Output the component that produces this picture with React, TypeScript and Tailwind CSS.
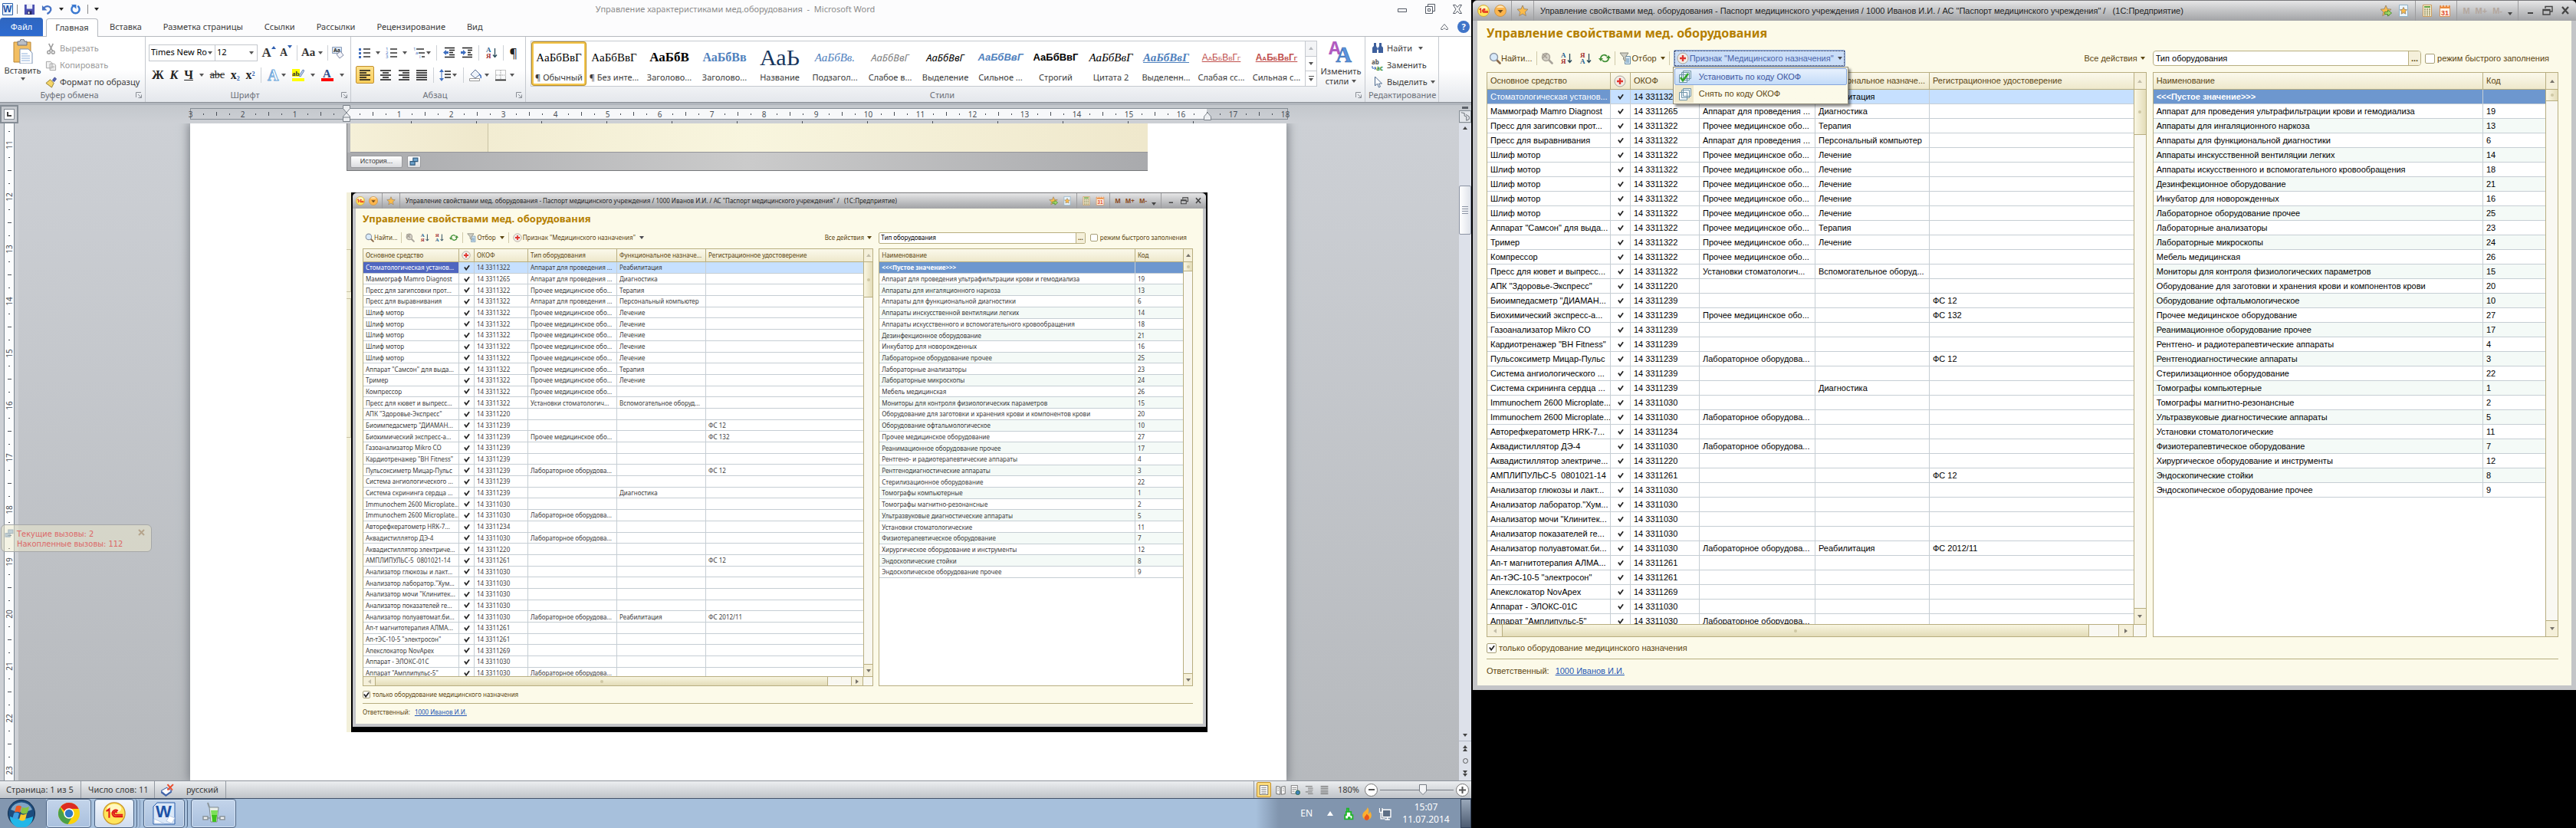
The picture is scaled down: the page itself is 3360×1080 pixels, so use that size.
import React from 'react';

type Row = [string, string, string?, string?, string?];

const ASSETS: Row[] = [
  ['Стоматологическая установ...', '14 3311322', 'Аппарат для проведения ...', 'Реабилитация'],
  ['Маммограф Mamro Diagnost', '14 3311265', 'Аппарат для проведения ...', 'Диагностика'],
  ['Пресс для загипсовки прот...', '14 3311322', 'Прочее медицинское обо...', 'Терапия'],
  ['Пресс для выравнивания', '14 3311322', 'Аппарат для проведения ...', 'Персональный компьютер'],
  ['Шлиф мотор', '14 3311322', 'Прочее медицинское обо...', 'Лечение'],
  ['Шлиф мотор', '14 3311322', 'Прочее медицинское обо...', 'Лечение'],
  ['Шлиф мотор', '14 3311322', 'Прочее медицинское обо...', 'Лечение'],
  ['Шлиф мотор', '14 3311322', 'Прочее медицинское обо...', 'Лечение'],
  ['Шлиф мотор', '14 3311322', 'Прочее медицинское обо...', 'Лечение'],
  ['Аппарат "Самсон" для выда...', '14 3311322', 'Прочее медицинское обо...', 'Терапия'],
  ['Тример', '14 3311322', 'Прочее медицинское обо...', 'Лечение'],
  ['Компрессор', '14 3311322', 'Прочее медицинское обо...'],
  ['Пресс для кювет и выпресс...', '14 3311322', 'Установки стоматологич...', 'Вспомогательное оборуд...'],
  ['АПК "Здоровье-Экспресс"', '14 3311220'],
  ['Биоимпедасметр "ДИАМАН...', '14 3311239', '', '', 'ФС 12'],
  ['Биохимический экспресс-а...', '14 3311239', 'Прочее медицинское обо...', '', 'ФС 132'],
  ['Газоанализатор Mikro CO', '14 3311239'],
  ['Кардиотренажер "BH Fitness"', '14 3311239'],
  ['Пульсоксиметр Мицар-Пульс', '14 3311239', 'Лабораторное оборудова...', '', 'ФС 12'],
  ['Система ангиологического ...', '14 3311239'],
  ['Система скрининга сердца ...', '14 3311239', '', 'Диагностика'],
  ['Immunochem 2600 Microplate...', '14 3311030'],
  ['Immunochem 2600 Microplate...', '14 3311030', 'Лабораторное оборудова...'],
  ['Авторефкератометр HRK-7...', '14 3311234'],
  ['Аквадистиллятор ДЭ-4', '14 3311030', 'Лабораторное оборудова...'],
  ['Аквадистиллятор электриче...', '14 3311220'],
  ['АМПЛИПУЛЬС-5  0801021-14', '14 3311261', '', '', 'ФС 12'],
  ['Анализатор глюкозы и лакт...', '14 3311030'],
  ['Анализатор лаборатор."Хум...', '14 3311030'],
  ['Анализатор мочи "Клинитек...', '14 3311030'],
  ['Анализатор показателей ге...', '14 3311030'],
  ['Анализатор полуавтомат.би...', '14 3311030', 'Лабораторное оборудова...', 'Реабилитация', 'ФС 2012/11'],
  ['Ап-т магнитотерапия АЛМА...', '14 3311261'],
  ['Ап-тЭС-10-5 "электросон"', '14 3311261'],
  ['Апекслокатор NovApex', '14 3311269'],
  ['Аппарат - ЭЛОКС-01С', '14 3311030'],
  ['Аппарат "Амплипульс-5"', '14 3311030', 'Лабораторное оборудова...'],
];

const TYPES: [string, string][] = [
  ['<<<Пустое значение>>>', ''],
  ['Аппарат для проведения ультрафильтрации крови и гемодиализа', '19'],
  ['Аппараты для ингаляционного наркоза', '13'],
  ['Аппараты для функциональной диагностики', '6'],
  ['Аппараты инскусственной вентиляции легких', '14'],
  ['Аппараты искусственного и вспомогательного кровообращения', '18'],
  ['Дезинфекционное оборудование', '21'],
  ['Инкубатор для новорожденных', '16'],
  ['Лабораторное оборудование прочее', '25'],
  ['Лабораторные анализаторы', '23'],
  ['Лабораторные микроскопы', '24'],
  ['Мебель медицинская', '26'],
  ['Мониторы для контроля физиологических параметров', '15'],
  ['Оборудование для заготовки и хранения крови и компонентов крови', '20'],
  ['Оборудование офтальмологическое', '10'],
  ['Прочее медицинское оборудование', '27'],
  ['Реанимационное оборудование прочее', '17'],
  ['Рентгено- и радиотерапевтические аппараты', '4'],
  ['Рентгенодиагностические аппараты', '3'],
  ['Стерилизационное оборудование', '22'],
  ['Томографы компьютерные', '1'],
  ['Томографы магнитно-резонансные', '2'],
  ['Ультразвуковые диагностические аппараты', '5'],
  ['Установки стоматологические', '11'],
  ['Физиотерапевтическое оборудование', '7'],
  ['Хирургическое оборудование и инструменты', '12'],
  ['Эндоскопические стойки', '8'],
  ['Эндоскопическое оборудование прочее', '9'],
];

const large = {
  open: true,
  text: "font-['Liberation_Sans',Arial,sans-serif] text-[11px]",
  icon: 'size-4',
  bar: 'h-[26px] px-[6px]',
  barGap: 'gap-[6px]',
  barRight: 'gap-[7px] ml-auto',
  frame: 'px-[6px] pb-[6px]',
  body: 'pl-3 pr-[17px]',
  heading: 'h-8 leading-8 text-[16px]',
  split: 'gap-2',
  toolbar: 'h-[22px] mt-[6px] mb-[7px] gap-[5px] pl-[3px]',
  icons: 'gap-[9px]',
  divider: 'h-[18px]',
  input: 'h-[20px] rounded pl-[3px]',
  dots: 'w-4',
  box: 'size-[13px]',
  form: 'gap-2',
  formRight: 'mr-3',
  headCell: 'h-[22px] leading-[21px] px-1',
  cell: 'h-[19px] leading-[18px] px-1',
  cols: ['w-[161px]', 'w-[26px]', 'w-[90px]', 'w-[151px]', 'w-[149px]', ''],
  codeCol: 'w-[81px]',
  tableA: '',
  tableB: '',
  scroll: 'w-4',
  scrollHead: 'h-[22px]',
  thumbA: 'h-[59px]',
  thumbB: 'h-[15px]',
  down: 'h-[21px]',
  hscroll: 'h-4',
  hbtn: 'w-5',
  hgap: 'w-[38px]',
  footer: 'h-[29px]',
  owner: 'h-[34px] pb-1 gap-2',
  current: 'bg-[#6d97cf]',
  memory: 'text-[#b3a79e]',
};

const compact: typeof large = {
  open: false,
  text: "font-['Noto_Sans',sans-serif] text-[8px]",
  icon: 'size-3',
  bar: 'h-[20px] px-1',
  barGap: 'gap-[5px]',
  barRight: 'gap-[6px] ml-auto',
  frame: 'px-1 pb-1',
  body: 'pl-[9px] pr-[13px]',
  heading: 'h-[26px] leading-[26px] text-[13px]',
  split: 'gap-[7px]',
  toolbar: 'h-[18px] mt-[3px] mb-[5px] gap-[5px] pl-[3px]',
  icons: 'gap-[7px]',
  divider: 'h-[14px]',
  input: 'h-[15px] rounded-xs pl-[2px]',
  dots: 'w-3',
  box: 'size-[10px]',
  form: 'gap-[6px]',
  formRight: 'mr-2',
  headCell: 'h-[17px] leading-4 px-[3px]',
  cell: 'h-[14px] leading-[13px] px-[3px]',
  cols: ['w-[125px]', 'w-[20px]', 'w-[70px]', 'w-[116px]', 'w-[116px]', ''],
  codeCol: 'w-[62px]',
  tableA: 'h-[561px]',
  tableB: 'h-[429px]',
  scroll: 'w-3',
  scrollHead: 'h-[17px]',
  thumbA: 'h-[46px]',
  thumbB: 'h-3',
  down: 'h-4',
  hscroll: 'h-3',
  hbtn: 'w-4',
  hgap: 'w-[30px]',
  footer: 'h-[23px]',
  owner: 'h-[26px] pb-1 gap-[6px]',
  current: 'bg-[#4f66c0]',
  memory: 'text-[#8a4a20]',
};

type Skin = typeof large;

const Icon: React.FC<{ className?: string; box?: string; children: React.ReactNode }> = ({
  className = 'size-4',
  box = '0 0 16 16',
  children,
}) => (
  <svg viewBox={box} className={`${className} shrink-0`} fill="none" aria-hidden="true">
    {children}
  </svg>
);

const Caret: React.FC<{ className?: string }> = ({ className = 'text-[#555]' }) => (
  <svg viewBox="0 0 6 4" className={`w-[6px] h-1 shrink-0 ${className}`} aria-hidden="true">
    <path d="M0 0h6L3 4z" fill="currentColor" />
  </svg>
);

const PlusIcon: React.FC<{ className: string }> = ({ className }) => (
  <Icon className={className}>
    <circle cx="8" cy="8" r="7" fill="#f1ece6" stroke="#aaa498" />
    <path d="M6.800 4h2.400v2.800H12v2.400H9.200V12H6.800V9.200H4V6.800h2.800z" fill="#e0352f" />
  </Icon>
);

const Magnifier: React.FC<{ className: string; off?: boolean }> = ({ className, off }) => (
  <Icon className={className}>
    <path d="M10 10l4.500 4.500" stroke={off ? '#a8a39a' : '#8a6a4a'} strokeWidth="2.600" strokeLinecap="round" />
    <circle cx="6.500" cy="6.500" r="5" fill={off ? '#d4d0c6' : '#d8eafa'} stroke={off ? '#aaa59b' : '#8c96a4'} strokeWidth="1.400" />
    {off && <path d="M2 2l6 6M8 2L2 8" stroke="#a39d92" strokeWidth="1.500" />}
  </Icon>
);

const SortIcon: React.FC<{ className: string; desc?: boolean }> = ({ className, desc }) => (
  <Icon className={className}>
    <text x="1" y="7" fontSize="9" fontWeight="700" fontFamily="Liberation Serif, serif" fill={desc ? '#a33030' : '#1f5f8f'}>
      {desc ? 'Я' : 'А'}
    </text>
    <text x="1" y="15" fontSize="9" fontWeight="700" fontFamily="Liberation Serif, serif" fill={desc ? '#1f5f8f' : '#a33030'}>
      {desc ? 'А' : 'Я'}
    </text>
    <path d="M12.500 2v11M10 10.500l2.500 3 2.500-3" stroke="#2a4a5a" strokeWidth="1.300" />
  </Icon>
);

const RefreshIcon: React.FC<{ className: string }> = ({ className }) => (
  <Icon className={className}>
    <path d="M3 9V7a4.500 4.500 0 0 1 8-1.500M13 7v2a4.500 4.500 0 0 1-8 1.500" stroke="#3f8f35" strokeWidth="1.700" />
    <path d="M0 8h6L3 12zM10 8h6l-3-4z" fill="#3f8f35" />
  </Icon>
);

const FilterIcon: React.FC<{ className: string }> = ({ className }) => (
  <Icon className={className}>
    <path d="M7.500 5.500h7v10h-7z" fill="#dcebf5" stroke="#6b8fa8" />
    <path d="M9 9h4M9 11h4M9 13h4" stroke="#5a8ab0" />
    <path d="M1 1h11L8 6.500V12L5.500 9.500V6.500z" fill="#cfcfc6" stroke="#85857a" />
  </Icon>
);

const StarIcon: React.FC<{ className: string; page?: boolean; arrow?: boolean }> = ({ className, page, arrow }) => (
  <Icon className={className}>
    {page && <path d="M2.500.5h11v15h-11z" fill="#eaf4fb" stroke="#8fb2c8" />}
    <path
      d={page ? 'M8 3.500l1.400 2.900 3.100.4-2.300 2.200.6 3.100L8 10.600l-2.800 1.500.6-3.100-2.300-2.200 3.100-.4z' : 'M8 1l2 4.700 5 .5-3.700 3.400 1 5L8 12l-4.300 2.600 1-5L1 6.200l5-.5z'}
      fill="#fbbb4a"
      stroke="#9a8468"
      strokeWidth=".9"
    />
    {arrow && <path d="M6.500 9.500h4V7l5 4-5 4v-2.500h-4z" fill="#a4d867" stroke="#3f8a2f" strokeWidth=".9" />}
  </Icon>
);

const CalcIcon: React.FC<{ className: string }> = ({ className }) => (
  <Icon className={className}>
    <path d="M2.500.5h11v15h-11z" fill="#fbf3da" stroke="#c99a5a" />
    <path d="M4 2h8v2H4z" fill="#5f9f3f" />
    <path d="M4 6h2M7 6h2M10 6h2M4 8.500h2M7 8.500h2M10 8.500h2M4 11h2M7 11h2M10 11h2M4 13.500h2M7 13.500h2M10 13.500h2" stroke="#8a8a5a" strokeWidth="1.400" />
  </Icon>
);

const CalendarIcon: React.FC<{ className: string }> = ({ className }) => (
  <Icon className={className}>
    <path d="M1.500 1.500h13v14h-13z" fill="#fff6ea" stroke="#d9925a" />
    <path d="M2 2h12v3H2z" fill="#ec8a3c" />
    <path d="M4 0v3M8 0v3M12 0v3" stroke="#fff" />
    <text x="8" y="13.500" textAnchor="middle" fontSize="9" fontWeight="700" fontFamily="Liberation Sans, sans-serif" fill="#e04a2a">
      31
    </text>
  </Icon>
);

const OneCLogo: React.FC<{ className: string }> = ({ className }) => (
  <Icon className={className}>
    <circle cx="8" cy="8" r="7.500" fill="#ffe45a" stroke="#c9962a" strokeWidth=".7" />
    <ellipse cx="8" cy="4.500" rx="5" ry="3" fill="#fff8c0" />
    <path d="M2.500 6.500L4.500 5v6M10.500 6.300A2.300 2.300 0 1 0 9.500 10.200h4.500M9.800 7.500A1 1 0 1 0 9 8.900h5" stroke="#e01818" strokeWidth="1.100" />
  </Icon>
);

const TableScroll: React.FC<{ skin: Skin; thumb: string; off?: boolean }> = ({ skin, thumb, off }) => (
  <div className={`${skin.scroll} flex shrink-0 flex-col border-l border-[#b8ae80] bg-[#f9f8f2]`}>
    <button aria-label="Вверх" className={`${skin.scrollHead} flex shrink-0 items-center justify-center border-b border-[#b8ae80] bg-[#f5f0da]`}>
      <Caret className={off ? 'rotate-180 text-[#c2bda8]' : 'rotate-180 text-[#76726a]'} />
    </button>
    <div className={`${thumb} flex shrink-0 items-center justify-center border-b border-[#b8ae80] bg-linear-to-r from-[#faf7e4] to-[#e3dcb8]`}>
      <span className="size-1 rounded-full bg-[#cfc8a4]" />
    </div>
    <div className="grow" />
    <button aria-label="Вниз" className={`${skin.down} flex shrink-0 items-center justify-center border-t border-[#b8ae80] bg-[#f5f0da]`}>
      <Caret className="text-[#76726a]" />
    </button>
  </div>
);

const head = 'overflow-hidden border-b border-r border-[#b8ae80] bg-linear-to-b from-[#fbf9ec] to-[#eee8cb] text-left font-normal text-[#5c4610] whitespace-nowrap last:border-r-0';
const line = 'overflow-hidden border-b border-r border-[#c6ced4] py-0 whitespace-pre last:border-r-0';

const AssetTable: React.FC<{ skin: Skin }> = ({ skin }) => (
  <div className="flex min-h-0 grow flex-col border border-[#b8ae80] bg-white">
    <div className="flex min-h-0 flex-1">
      <div className="min-w-0 flex-1 overflow-hidden">
        <table className={`${skin.tableA} w-full table-fixed border-separate border-spacing-0`}>
          <thead>
            <tr>
              <th className={`${head} ${skin.headCell} ${skin.cols[0]}`}>Основное средство</th>
              <th className={`${head} ${skin.headCell} ${skin.cols[1]}`} aria-label="Медицинское назначение">
                <PlusIcon className={`${skin.icon} block`} />
              </th>
              <th className={`${head} ${skin.headCell} ${skin.cols[2]}`}>ОКОФ</th>
              <th className={`${head} ${skin.headCell} ${skin.cols[3]}`}>Тип оборудования</th>
              <th className={`${head} ${skin.headCell} ${skin.cols[4]}`}>Функциональное назначе...</th>
              <th className={`${head} ${skin.headCell}`}>Регистрационное удостоверение</th>
            </tr>
          </thead>
          <tbody>
            {ASSETS.map(([name, code, kind, purpose, cert], i) => (
              <tr key={i} className={i === 0 ? 'bg-[#c6e0ff]' : 'bg-white'}>
                <td className={`${line} ${skin.cell} ${i === 0 ? `${skin.current} text-white` : ''}`}>{name}</td>
                <td className={`${line} ${skin.cell}`}>
                  <Icon className="mx-auto block size-[8px]" box="0 0 9 9">
                    <path d="M1 4l2.500 3.500L8 1.500" stroke="#222" strokeWidth="2" />
                  </Icon>
                </td>
                <td className={`${line} ${skin.cell}`}>{code}</td>
                <td className={`${line} ${skin.cell}`}>{kind}</td>
                <td className={`${line} ${skin.cell}`}>{purpose}</td>
                <td className={`${line} ${skin.cell}`}>{cert}</td>
              </tr>
            ))}
          </tbody>
        </table>
      </div>
      <TableScroll skin={skin} thumb={skin.thumbA} off />
    </div>
    <div className={`${skin.hscroll} flex shrink-0 border-t border-[#b8ae80] bg-[#f9f8f2]`}>
      <button aria-label="Влево" className={`${skin.hbtn} flex items-center justify-center border-r border-[#b8ae80] bg-[#f5f0da]`}>
        <Caret className="rotate-90 text-[#c2bda8]" />
      </button>
      <div className="flex grow items-center justify-center border-r border-[#b8ae80] bg-linear-to-b from-[#f8f5e0] to-[#e3dcb8]">
        <span className="size-1 rounded-full bg-[#cfc8a4]" />
      </div>
      <div className={skin.hgap} />
      <button aria-label="Вправо" className={`${skin.hbtn} flex items-center justify-center border-x border-[#b8ae80] bg-[#f5f0da]`}>
        <Caret className="-rotate-90 text-[#76726a]" />
      </button>
      <div className={skin.scroll} />
    </div>
  </div>
);

const TypeTable: React.FC<{ skin: Skin }> = ({ skin }) => (
  <div className="flex min-h-0 grow border border-[#b8ae80] bg-white">
    <div className="min-w-0 flex-1 overflow-hidden">
      <table className={`${skin.tableB} w-full table-fixed border-separate border-spacing-0`}>
        <thead>
          <tr>
            <th className={`${head} ${skin.headCell}`}>Наименование</th>
            <th className={`${head} ${skin.headCell} ${skin.codeCol}`}>Код</th>
          </tr>
        </thead>
        <tbody>
          {TYPES.map(([name, code], i) => (
            <tr key={name} className={i === 0 ? 'bg-[#6d97cf] font-bold text-white' : 'odd:bg-[#f4faf7] even:bg-white'}>
              <td className={`${line} ${skin.cell}`}>{name}</td>
              <td className={`${line} ${skin.cell}`}>{code}</td>
            </tr>
          ))}
        </tbody>
      </table>
    </div>
    <TableScroll skin={skin} thumb={skin.thumbB} />
  </div>
);

const FlagMenu: React.FC = () => (
  <div role="menu" className="absolute top-[22px] -left-px z-10 w-[229px] border border-[#8f8a78] bg-[#fcfae9] p-px shadow-[3px_3px_3px_rgba(0,0,0,.45)]">
    <button role="menuitem" className="flex h-[22px] w-full items-center gap-[10px] rounded-xs border border-[#86a6dc] bg-linear-to-b from-[#e8f1fd] to-[#c3dbf8] px-[5px] text-[#3d56a0]">
      <Icon>
        <path d="M5.500.5h10v10h-10zM3.500 2.500h10v10h-10zM.5 5.500h10v10h-10z" fill="#e4f1f8" stroke="#6f94a8" />
        <path d="M2 9l3 4 7-9" stroke="#35a52a" strokeWidth="2.600" />
      </Icon>
      Установить по коду ОКОФ
    </button>
    <button role="menuitem" className="flex h-[23px] w-full items-center gap-[10px] bg-linear-to-r from-[#efe8cc] from-[25px] to-[#fcfae9] to-[25px] px-[6px] text-[#5c4610]">
      <Icon>
        <path d="M5.500.5h10v10h-10zM3.500 2.500h10v10h-10zM.5 5.500h10v10h-10z" fill="#f4f9fc" stroke="#6f94a8" />
      </Icon>
      Снять по коду ОКОФ
    </button>
  </div>
);

const EnterpriseWindow: React.FC<{ skin: Skin; id: string }> = ({ skin, id }) => {
  const divider = <span className={`${skin.divider} w-px shrink-0 bg-[#cfc9a8]`} />;
  const barDivider = <span className="h-full w-px shrink-0 bg-[#9c9c9e]" />;

  return (
    <section className={`flex h-full min-w-0 flex-col overflow-hidden rounded-t-md border-t border-[#77777a] bg-[#c4c5c8] ${skin.text}`}>
      <header className={`${skin.bar} ${skin.barGap} flex shrink-0 items-center whitespace-nowrap bg-linear-to-b from-[#e6e6e7] via-[#c3c4c6] to-[#a2a3a6] text-[#222]`}>
        <OneCLogo className={skin.icon} />
        <Icon className={skin.icon}>
          <circle cx="8" cy="8" r="7.500" fill="#fbb54e" stroke="#c38a3a" strokeWidth=".7" />
          <path d="M3 4a6 6 0 0 1 10 0z" fill="#ffe6b8" />
          <path d="M4.500 7h7L8 11z" fill="#6b4a1f" />
        </Icon>
        {barDivider}
        <StarIcon className={skin.icon} />
        {barDivider}
        <h1 className="overflow-hidden pl-[2px] whitespace-pre">
          {'Управление свойствами мед. оборудования - Паспорт медицинского учреждения / 1000 Иванов И.И. / АС "Паспорт медицинского учреждения" /   (1С:Предприятие)'}
        </h1>
        <div className={`${skin.barRight} flex h-full items-center`}>
          <StarIcon className={skin.icon} arrow />
          <StarIcon className={skin.icon} page />
          {barDivider}
          <CalcIcon className={skin.icon} />
          <CalendarIcon className={skin.icon} />
          {barDivider}
          <button className={`font-bold ${skin.memory}`}>M</button>
          <button className={`font-bold ${skin.memory}`}>M+</button>
          <button className={`font-bold ${skin.memory}`}>M-</button>
          <Caret className="translate-y-1 text-[#444]" />
          {barDivider}
          <button aria-label="Свернуть">
            <Icon className={skin.icon}><path d="M5 11h7" stroke="#444" strokeWidth="2" /></Icon>
          </button>
          <button aria-label="Восстановить">
            <Icon className={skin.icon}><path d="M5 5V2.500h9V9h-3M2 6.500h9V13H2zM2 7.500h9" stroke="#444" strokeWidth="1.400" /></Icon>
          </button>
          <button aria-label="Закрыть">
            <Icon className={skin.icon}><path d="M4 3l8 9M12 3l-8 9" stroke="#444" strokeWidth="2.200" /></Icon>
          </button>
        </div>
      </header>

      <div className={`${skin.frame} flex min-h-0 grow flex-col`}>
        <div className={`${skin.body} flex min-h-0 grow flex-col bg-[#fcfae9]`}>
          <h2 className={`${skin.heading} shrink-0 font-['Noto_Sans',sans-serif] font-bold whitespace-nowrap text-[#b57f00]`}>
            Управление свойствами мед. оборудования
          </h2>

          <div className={`${skin.split} flex min-h-0 grow`}>
            <div className="flex min-h-0 min-w-0 flex-[860] flex-col">
              <div className={`${skin.toolbar} flex shrink-0 items-center whitespace-nowrap text-[#5c4610]`}>
                <button className="flex items-center">
                  <Magnifier className={skin.icon} />
                  Найти...
                </button>
                {divider}
                <div className={`${skin.icons} flex`}>
                  <button aria-label="Отменить поиск"><Magnifier className={skin.icon} off /></button>
                  <button aria-label="По возрастанию"><SortIcon className={skin.icon} /></button>
                  <button aria-label="По убыванию"><SortIcon className={skin.icon} desc /></button>
                  <button aria-label="Обновить"><RefreshIcon className={skin.icon} /></button>
                </div>
                {divider}
                <button className="flex items-center gap-px">
                  <FilterIcon className={skin.icon} />
                  Отбор
                  <Caret className="ml-1 text-[#5c4610]" />
                </button>
                {divider}
                <div className="relative">
                  <button
                    className={
                      skin.open
                        ? 'flex h-[22px] items-center gap-px rounded-xs border border-[#7f9fd8] bg-[#c9ddf8] px-[3px] text-[#4a63a8] outline-1 -outline-offset-2 outline-dotted outline-[#334]'
                        : 'flex items-center gap-px'
                    }
                  >
                    <PlusIcon className={skin.icon} />
                    Признак "Медицинского назначения"
                    <Caret className="ml-1 text-[#4a4a50]" />
                  </button>
                  {skin.open && <FlagMenu />}
                </div>
                <button className="ml-auto flex items-center gap-1 pr-[2px]">
                  Все действия
                  <Caret className="text-[#5c4610]" />
                </button>
              </div>
              <AssetTable skin={skin} />
            </div>

            <div className="flex min-h-0 min-w-0 flex-[529] flex-col">
              <div className={`${skin.toolbar} ${skin.form} !pl-0 flex shrink-0 items-center whitespace-nowrap text-[#5c4610]`}>
                <div className={`${skin.input} flex min-w-0 grow overflow-hidden border border-[#b8ae80] bg-white`}>
                  <input aria-label="Реквизит" defaultValue="Тип оборудования" className="min-w-0 grow text-black outline-none" />
                  <button className={`${skin.dots} border-l border-[#b8ae80] bg-[#f5f0da] leading-none font-bold`}>...</button>
                </div>
                <label className={`${skin.formRight} flex items-center gap-[3px]`}>
                  <input type="checkbox" className={`${skin.box} appearance-none rounded-xs border border-[#a89f78] bg-white`} />
                  режим быстрого заполнения
                </label>
              </div>
              <TypeTable skin={skin} />
            </div>
          </div>

          <div className={`${skin.footer} flex shrink-0 items-center gap-[3px] border-b border-[#b8ae80] text-[#5c4610]`}>
            <span className="relative flex">
              <input id={`${id}-only`} type="checkbox" defaultChecked className={`${skin.box} appearance-none rounded-xs border border-[#a89f78] bg-white`} />
              <Icon className="pointer-events-none absolute inset-0 m-auto size-[8px]" box="0 0 9 9">
                <path d="M1 4l2.500 3.500L8 1.500" stroke="#222" strokeWidth="2" />
              </Icon>
            </span>
            <label htmlFor={`${id}-only`}>только оборудование медицинского назначения</label>
          </div>
          <div className={`${skin.owner} flex shrink-0 items-center text-[#5c4610]`}>
            Ответственный:
            <a href="#owner" className="text-[#2357b5] underline">1000 Иванов И.И.</a>
          </div>
        </div>
      </div>
    </section>
  );
};

const STYLES: [string, string, string][] = [
  ['АаБбВвГ', '¶ Обычный', "font-['Liberation_Serif',serif] text-[15px]"],
  ['АаБбВвГ', '¶ Без инте...', "font-['Liberation_Serif',serif] text-[15px]"],
  ['АаБбВ', 'Заголово...', "font-['Liberation_Serif',serif] font-bold text-[17px]"],
  ['АаБбВв', 'Заголово...', "font-['Liberation_Serif',serif] font-bold text-[16px] text-[#4f81bd]"],
  ['АаЬ', 'Название', "font-['Liberation_Serif',serif] text-[30px] text-[#17365d]"],
  ['АаБбВв.', 'Подзагол...', "font-['Liberation_Serif',serif] italic text-[15px] text-[#4f81bd]"],
  ['АаБбВвГ', 'Слабое в...', "font-['Noto_Sans',sans-serif] italic text-[13px] text-[#808080]"],
  ['АаБбВвГ', 'Выделение', "font-['Noto_Sans',sans-serif] italic text-[13px]"],
  ['АаБбВвГ', 'Сильное ...', "font-['Liberation_Sans',sans-serif] italic font-bold text-[13px] text-[#4f81bd]"],
  ['АаБбВвГ', 'Строгий', "font-['Liberation_Sans',sans-serif] font-bold text-[13px]"],
  ['АаБбВвГ', 'Цитата 2', "font-['Liberation_Serif',serif] italic text-[15px]"],
  ['АаБбВвГ', 'Выделенн...', "font-['Liberation_Serif',serif] italic font-bold text-[15px] text-[#4f81bd] underline"],
  ['АаБбВвГг', 'Слабая сс...', "font-['Liberation_Sans',sans-serif] text-[12px] text-[#c0504d] underline [font-variant:small-caps]"],
  ['АаБбВвГг', 'Сильная с...', "font-['Liberation_Sans',sans-serif] font-bold text-[12px] text-[#c0504d] underline [font-variant:small-caps]"],
];

const GroupBox: React.FC<{ title: string; className?: string; launcher?: boolean; children: React.ReactNode }> = ({
  title,
  className = '',
  launcher = true,
  children,
}) => (
  <div className={`${className} flex h-full flex-col border-r border-[#c5c9cf]`}>
    <div className="min-h-0 grow">{children}</div>
    <div className="flex h-[18px] shrink-0 items-center px-1 text-[#6b7079]">
      <span className="grow text-center">{title}</span>
      {launcher && (
        <Icon className="size-2" box="0 0 8 8">
          <path d="M.5 7V.5H7M3 3l4 4M7.500 3.500v4h-4" stroke="#8a8f96" />
        </Icon>
      )}
    </div>
  </div>
);

const RibbonDivider = () => <span className="h-5 w-px shrink-0 bg-[#cdd1d6]" />;

const Lines: React.FC<{ d: string }> = ({ d }) => (
  <Icon><path d={d} stroke="#111" strokeWidth="1.500" /></Icon>
);

const Ribbon: React.FC = () => (
  <div className="flex h-[86px] shrink-0 border-b border-[#8d9299] bg-linear-to-b from-white via-white to-[#e4e7ec] whitespace-nowrap">
    <GroupBox title="Буфер обмена" className="w-[190px] shrink-0">
      <div className="flex h-full pt-[3px]">
        <button className="flex w-[59px] shrink-0 flex-col items-center leading-[18px]">
          <Icon className="size-8" box="0 0 32 32">
            <path d="M4 4h22v26H4z" fill="#f2be62" stroke="#b98532" />
            <path d="M9 3h3a3 3 0 0 1 6 0h3v5H9z" fill="#b9bec6" stroke="#6c7280" />
            <path d="M12 13h11l5 5v14H12z" fill="#fff" stroke="#7c93b5" />
            <path d="M14 19h8M14 22h11M14 25h11M14 28h11" stroke="#8fb0dc" />
          </Icon>
          Вставить
          <Caret />
        </button>
        <div className="flex flex-col pt-px leading-[22px]">
          <button disabled className="flex items-center gap-1 text-[#9a9a9a]">
            <Icon className="size-[15px]"><path d="M5 1l5 10M11 1L6 11" stroke="#9a9a9a" strokeWidth="1.600" /><circle cx="5" cy="13" r="2" stroke="#9a9a9a" strokeWidth="1.500" /><circle cx="11" cy="13" r="2" stroke="#9a9a9a" strokeWidth="1.500" /></Icon>
            Вырезать
          </button>
          <button disabled className="flex items-center gap-1 text-[#9a9a9a]">
            <Icon className="size-[15px]"><path d="M1.500 2.500h6l2 2v7h-8zM6.500 5.500h6l2 2v7h-8z" fill="#f2f2f2" stroke="#a2a2a2" /><path d="M8 9h5M8 11h5" stroke="#b5b5b5" /></Icon>
            Копировать
          </button>
          <button className="flex items-center gap-1">
            <Icon className="size-[15px]"><path d="M10 5l3-4 2.500 2-3 4z" fill="#5a67b8" stroke="#3d4a8c" /><path d="M7 4l5 5-3 6-8-6z" fill="#f5d568" stroke="#8d7a2d" /></Icon>
            Формат по образцу
          </button>
        </div>
      </div>
    </GroupBox>

    <GroupBox title="Шрифт" className="w-[268px] shrink-0">
      <div className="flex flex-col gap-[6px] px-1 pt-[9px]">
        <div className="flex h-[23px] items-center justify-between">
          <div className="flex h-[22px]">
            <div className="flex w-[87px] items-center border border-[#c3c7cd] bg-white pr-[3px] pl-[2px]">
              <input aria-label="Шрифт" defaultValue="Times New Ro" className="w-[74px] grow text-black outline-none" />
              <Caret />
            </div>
            <div className="flex w-[55px] items-center border border-l-0 border-[#c3c7cd] bg-white pr-1 pl-[2px]">
              <input aria-label="Размер шрифта" defaultValue="12" className="w-8 grow text-black outline-none" />
              <Caret />
            </div>
          </div>
          <button className="flex font-['Liberation_Serif',serif] text-[17px] font-bold text-[#333]">А<Caret className="mt-1 rotate-180 text-[#2f5fb0]" /></button>
          <button className="flex font-['Liberation_Serif',serif] text-[14px] font-bold text-[#333]">А<Caret className="mt-px text-[#2f5fb0]" /></button>
          <RibbonDivider />
          <button className="flex items-center gap-1 font-['Liberation_Serif',serif] text-[15px] font-bold text-[#333]">Аа<Caret /></button>
          <RibbonDivider />
          <button aria-label="Очистить формат" className="mr-1">
            <Icon><path d="M.5.5h12v8H.5z" fill="#dde8f6" stroke="#8a9cb8" /><text x="2" y="7" fontSize="7" fontWeight="700" fill="#333">Aa</text><path d="M6 10l5-4 4 5-5 4z" fill="#f4f4fa" stroke="#7f8aa5" /></Icon>
          </button>
        </div>
        <div className="flex h-[23px] items-center justify-between px-1 font-['Liberation_Serif',serif] text-[16px] text-[#222]">
          <button className="font-bold">Ж</button>
          <button className="font-bold italic">К</button>
          <button className="flex items-center gap-2 font-bold underline">Ч<Caret /></button>
          <button className="text-[14px] line-through">abc</button>
          <button className="font-bold">x<sub className="text-[8px] text-[#2f5fb0]">2</sub></button>
          <button className="font-bold">x<sup className="text-[8px] text-[#2f5fb0]">2</sup></button>
          <RibbonDivider />
          <button className="flex items-center gap-1 text-[20px] font-bold text-white [-webkit-text-stroke:1px_#6fa9dc]">А<Caret /></button>
          <button className="flex items-center gap-2">
            <Icon><path d="M0 0h10v10H0zM0 12h16v4H0z" fill="#ff0" /><text x="0" y="9" fontSize="9" fontWeight="700" fill="#333">ab</text><path d="M9 9l5-8 2 1-5 8z" fill="#c3d3ec" stroke="#4d6fa8" strokeWidth=".8" /></Icon>
            <Caret />
          </button>
          <button className="flex items-center gap-2">
            <Icon><path d="M0 12h16v4H0z" fill="#f00" /><text x="2" y="11" fontSize="15" fontWeight="700" fill="#2f4f8f">А</text></Icon>
            <Caret />
          </button>
        </div>
      </div>
    </GroupBox>

    <GroupBox title="Абзац" className="w-[228px] shrink-0">
      <div className="flex flex-col gap-[6px] px-[6px] pt-[9px]">
        <div className="flex h-[23px] items-center justify-between pr-1 pl-1">
          <button aria-label="Маркеры" className="flex items-center gap-[6px]">
            <Icon><path d="M6 3h9M6 8h9M6 13h9" stroke="#333" strokeWidth="1.300" /><path d="M0 2h3v3H0zM0 7h3v3H0zM0 12h3v3H0z" fill="#3f6fc0" /></Icon>
            <Caret />
          </button>
          <button aria-label="Нумерация" className="flex items-center gap-[6px]">
            <Icon><path d="M6 3h9M6 8h9M6 13h9" stroke="#333" strokeWidth="1.300" /><text x="0" y="5" fontSize="6" fill="#3f6fc0">1</text><text x="0" y="10" fontSize="6" fill="#3f6fc0">2</text><text x="0" y="15" fontSize="6" fill="#3f6fc0">3</text></Icon>
            <Caret />
          </button>
          <button aria-label="Многоуровневый список" className="flex items-center gap-px">
            <Icon><path d="M4 3h10M7 8h8M11 13h4" stroke="#333" strokeWidth="1.300" /><text x="0" y="5" fontSize="6" fill="#3f6fc0">1</text><text x="3" y="10" fontSize="6" fill="#3f6fc0">a</text><text x="8" y="15" fontSize="6" fill="#3f6fc0">i</text></Icon>
            <Caret />
          </button>
          <RibbonDivider />
          <button aria-label="Уменьшить отступ"><Icon><path d="M2 1.500h13M8 4.500h7M8 7.500h5M8 10.500h7M2 13.500h13" stroke="#222" strokeWidth="1.300" /><path d="M0 7.500L4 4v2h3v3H4v2z" fill="#3f6fc0" /></Icon></button>
          <button aria-label="Увеличить отступ"><Icon><path d="M2 1.500h13M9 4.500h6M9 7.500h4M9 10.500h6M2 13.500h13" stroke="#222" strokeWidth="1.300" /><path d="M7 7.500L3 4v2H0v3h3v2z" fill="#3f6fc0" /></Icon></button>
          <RibbonDivider />
          <button aria-label="Сортировка"><SortIcon className="size-4" /></button>
          <RibbonDivider />
          <button className="text-[16px] leading-none text-[#222]">¶</button>
        </div>
        <div className="flex h-[23px] items-center justify-between pr-2">
          <button aria-label="По левому краю" className="flex h-[23px] w-6 items-center justify-center rounded-xs border border-[#c2902e] bg-linear-to-b from-[#fde08a] to-[#fbcf5c]">
            <Lines d="M1 2h14M1 5h9M1 8h14M1 11h9M1 14h14" />
          </button>
          <button aria-label="По центру"><Lines d="M1 2h14M4 5h8M1 8h14M4 11h8M1 14h14" /></button>
          <button aria-label="По правому краю"><Lines d="M1 2h14M6 5h9M1 8h14M6 11h9M1 14h14" /></button>
          <button aria-label="По ширине"><Lines d="M1 2h14M1 5h14M1 8h14M1 11h14M1 14h14" /></button>
          <RibbonDivider />
          <button aria-label="Интервал" className="flex items-center gap-px">
            <Icon><path d="M7 3h8M7 7h8M7 11h8" stroke="#222" strokeWidth="1.300" /><path d="M3 0l3 4H0zM3 16l3-4H0zM2.500 4h1v8h-1z" fill="#3f6fc0" /></Icon>
            <Caret />
          </button>
          <RibbonDivider />
          <button aria-label="Заливка" className="flex items-center gap-1">
            <Icon><path d="M2 7l6-6 6 6-6 5z" fill="#eef3fa" stroke="#5a6f95" /><path d="M13 7c2 1 3 3 2 5" stroke="#3f6fc0" strokeWidth="1.600" /><path d="M.5 12.500h13v3H.5z" fill="#fff" stroke="#999" /></Icon>
            <Caret />
          </button>
          <button aria-label="Границы" className="flex items-center gap-1">
            <Icon><path d="M1.500 1.500h13v12h-13zM8 2v12M2 8h12" stroke="#888" strokeDasharray="1 1" /><path d="M1 14.500h14" stroke="#222" strokeWidth="1.500" /></Icon>
            <Caret />
          </button>
        </div>
      </div>
    </GroupBox>

    <GroupBox title="Стили" className="min-w-0 flex-1">
      <div className="flex h-full pt-[5px] pl-[6px]">
        <div className="flex h-[60px] min-w-0 grow overflow-hidden border border-[#c5c9cf] bg-white">
          {STYLES.map(([sample, name, look], i) => (
            <button
              key={name + i}
              className={`flex w-[72px] shrink-0 flex-col items-center overflow-hidden whitespace-nowrap ${i === 0 ? 'rounded-sm border-[3px] border-[#f4c64e] outline-1 -outline-offset-1 outline-[#b98f2d]' : 'border-[3px] border-white'}`}
            >
              <span className="flex h-9 w-[64px] items-center justify-center overflow-hidden text-black">
                <span className={`${look} leading-7`}>{sample}</span>
              </span>
              <span className="leading-4">{name}</span>
            </button>
          ))}
          <div className="ml-auto flex w-[15px] shrink-0 flex-col divide-y divide-[#c5c9cf] border-l border-[#c5c9cf]">
            <button aria-label="Предыдущие стили" className="flex flex-1 items-center justify-center bg-[#f3f4f6]"><Caret className="rotate-180 text-[#b5b8bd]" /></button>
            <button aria-label="Следующие стили" className="flex flex-1 items-center justify-center"><Caret /></button>
            <button aria-label="Все стили" className="flex flex-1 flex-col items-center justify-center gap-[2px]"><span className="h-px w-[7px] bg-[#555]" /><Caret /></button>
          </div>
        </div>
        <button className="flex w-[62px] shrink-0 flex-col items-center leading-[13px]">
          <Icon className="size-[33px]" box="0 0 32 32">
            <text x="0" y="17" fontSize="22" fontWeight="700" fontFamily="Noto Sans, sans-serif" fill="#b15cc0">A</text>
            <text x="9" y="27" fontSize="28" fontWeight="700" fontFamily="Liberation Serif, serif" fill="#5b93dc" stroke="#2f5fa8" strokeWidth=".6">A</text>
          </Icon>
          <span>Изменить</span>
          <span className="flex items-center gap-1">стили<Caret /></span>
        </button>
      </div>
    </GroupBox>

    <GroupBox title="Редактирование" className="mr-[42px] w-[96px] shrink-0" launcher={false}>
      <div className="flex flex-col pt-1 pl-2 leading-[22px]">
        <button className="flex items-center gap-1">
          <Icon><path d="M3 1h3v4H3zM10 1h3v4h-3zM1 7l2-2h3l1 2v7H1zM9 7l1-2h3l2 2v7H9z" fill="#3d5f9c" /><path d="M7 7h2v3H7z" fill="#6d8cc4" /></Icon>
          Найти<Caret className="ml-1 text-[#555]" />
        </button>
        <button className="flex items-center gap-1">
          <Icon><text x="0" y="7" fontSize="8" fontWeight="700" fill="#555">ab</text><text x="6" y="15" fontSize="8" fontWeight="700" fill="#2f8a2f">ac</text><path d="M1 9v3h4M4 10l2 2-2 2" stroke="#2f5fb0" /></Icon>
          Заменить
        </button>
        <button className="flex items-center gap-1">
          <Icon><path d="M4.500 1v12l3-3 2 5 2-1-2-4h4z" fill="#fff" stroke="#4d6a8f" /></Icon>
          Выделить<Caret className="text-[#555]" />
        </button>
      </div>
    </GroupBox>
  </div>
);

const Tick: React.FC<{ step: number; upright?: boolean }> = ({ step, upright }) => {
  if (step === 0) return null;
  if (step % 4 === 0) return <span className={upright ? '-rotate-90' : ''}>{Math.abs(step / 4)}</span>;
  if (step % 2 === 0) return <span className={upright ? 'h-px w-[5px] bg-[#4a4f57]' : 'h-[5px] w-px bg-[#4a4f57]'} />;
  return <span className={upright ? 'h-px w-[2px] bg-[#4a4f57]' : 'h-[2px] w-px bg-[#4a4f57]'} />;
};

const HORIZONTAL = Array.from({ length: 85 }, (_, i) => i - 12);
const VERTICAL = Array.from({ length: 50 }, (_, i) => i + 43);
const TAB_STOPS = Array.from({ length: 13 }, (_, i) => i);

const RulerRow: React.FC = () => (
  <div className="flex h-6 shrink-0 bg-linear-to-b from-[#c3c7cc] to-[#cdd0d5] text-[10px] leading-none text-[#4a4f57]">
    <div className="flex h-6 w-6 shrink-0 items-center justify-center border-2 border-[#858d95]">
      <span className="flex size-[14px] items-center justify-center border border-[#858d95] bg-white">
        <span className="size-[6px] border-b-2 border-l-2 border-[#444]" />
      </span>
    </div>
    <div className="min-w-0 grow overflow-hidden pt-1 pl-[216px]">
      <div className="relative flex h-[15px] w-[1445px]">
        <div className="absolute inset-y-0 right-[5px] left-2 flex border border-[#858d95]">
          <div className="ml-[203px] grow bg-[#f7f8fa]" />
          <div className="w-[105px]" />
        </div>
        {HORIZONTAL.map((s) => (
          <span key={s} className="relative flex w-[17px] shrink-0 items-center justify-center"><Tick step={s} /></span>
        ))}
        <Icon className="absolute -top-1 left-[207px] h-[22px] w-[10px]" box="0 0 10 22">
          <path d="M.5.5h9v4L5 10l4.500 5v6.500h-9V15L5 10 .5 4.500zM.5 16h9" fill="#eceef1" stroke="#7a8189" />
        </Icon>
        <Icon className="absolute top-[5px] right-[105px] h-[11px] w-[10px]" box="0 0 10 11">
          <path d="M5 .8L9.500 6v4.500h-9V6z" fill="#eceef1" stroke="#7a8189" />
        </Icon>
      </div>
      <div className="flex gap-[84px] pt-[2px] pl-[296px]">
        {TAB_STOPS.map((s) => (
          <span key={s} className="h-[3px] w-px shrink-0 bg-[#4a4f57]" />
        ))}
      </div>
    </div>
    <div className="flex w-4 shrink-0 flex-col items-center pt-[2px]">
      <span className="h-[3px] w-2 bg-[#5d6269]" />
      <Icon className="mt-[2px] h-4 w-4 border border-[#858d95] bg-[#e3e6ea]">
        <path d="M2 2l5 1v4l3 1v6l4-2V8L9 5" stroke="#5d6269" />
      </Icon>
    </div>
  </div>
);

const WordDocument: React.FC = () => (
  <div className="flex min-h-0 grow">
    <div className="w-6 shrink-0 overflow-hidden bg-[#cdd0d5] pl-[5px]">
      <div className="flex h-full w-[14px] flex-col border-x border-[#7b8791] bg-[#fbfcfd] pt-[2px] text-[10px] leading-none text-[#4a4f57]">
        {VERTICAL.map((s) => (
          <span key={s} className="flex h-[17px] shrink-0 items-center justify-center"><Tick step={s} upright /></span>
        ))}
      </div>
    </div>
    <div className="min-w-0 flex-1 overflow-hidden bg-linear-to-b from-[#cdd0d5] to-[#b6b9bd] pr-[225px] pl-[224px]">
      <div className="h-full bg-white pr-[103px] pl-[204px] shadow-[0_0_12px_2px_#7c8187]">
        <div className="mr-[78px] flex h-[62px] flex-col border-b border-l border-[#77797c] bg-[#b9babc] pl-1 font-['Liberation_Sans',Arial,sans-serif] text-[9px]">
          <div className="flex h-[38px] border-b border-[#94959a] bg-linear-to-r from-[#efe8cc] via-[#f8f5de] to-[#efe8cc]">
            <div className="w-[180px] border-r border-[#c9c3a4] bg-linear-to-r from-[#f5f0d8] to-[#efe8cc]" />
          </div>
          <div className="-ml-1 flex grow items-center gap-[6px] bg-linear-to-r from-[#a9aaad] via-[#cbcbcb] to-[#a9aaad] pl-1">
            <button className="h-4 w-[68px] rounded-xs border border-[#9a9b9e] bg-linear-to-b from-white to-[#dcdde0] leading-none">История...</button>
            <button aria-label="Окна" className="flex h-4 w-[18px] items-center justify-center rounded-xs border border-[#9a9b9e] bg-linear-to-b from-white to-[#dcdde0]">
              <Icon className="size-3"><path d="M6.500 1.500h8v6h-8zM1.500 7.500h8v6h-8z" fill="#6fa3cc" stroke="#2f5a7d" strokeWidth="1.500" /></Icon>
            </button>
          </div>
        </div>

        <div className="mt-7 flex h-[704px]">
          <div className="w-[6px] shrink-0 bg-[#f3f0da] pt-[74px]">
            <div className="h-14 border-y border-r border-[#c9c3a4]" />
            <div className="mt-2 h-[182px] border-y border-r border-[#c9c3a4]" />
          </div>
          <div className="min-w-0 grow bg-black pr-[2px] pb-[7px] pl-[2px]">
            <EnterpriseWindow skin={compact} id="doc" />
          </div>
        </div>
      </div>
    </div>
    <div className="flex w-4 shrink-0 flex-col items-center bg-[#dde1ea] text-[#444]">
      <button aria-label="Прокрутить вверх" className="flex h-3 items-center"><Caret className="rotate-180" /></button>
      <div className="mt-[69px] flex h-16 w-4 flex-col items-center justify-center gap-[2px] rounded-xs border border-[#8b93a3] bg-linear-to-r from-white to-[#dfe3ea]">
        <span className="h-px w-2 bg-[#8b93a3]" />
        <span className="h-px w-2 bg-[#8b93a3]" />
        <span className="h-px w-2 bg-[#8b93a3]" />
        <span className="h-px w-2 bg-[#8b93a3]" />
      </div>
      <div className="grow" />
      <button aria-label="Прокрутить вниз" className="mb-[5px]"><Caret className="" /></button>
      <div className="flex h-[52px] w-full flex-col items-center justify-around border-t border-[#b3b9c6]">
        <button aria-label="Предыдущая страница" className="flex flex-col"><Caret className="rotate-180" /><Caret className="rotate-180" /></button>
        <span className="size-[7px] rounded-full border border-[#555]" />
        <button aria-label="Следующая страница" className="flex flex-col"><Caret className="" /><Caret className="" /></button>
      </div>
    </div>
  </div>
);

const StatusBar: React.FC = () => (
  <footer className="flex h-[23px] shrink-0 items-center border-t border-[#8c929b] bg-linear-to-b from-[#eceef0] to-[#c0c4c9] whitespace-nowrap">
    <span className="h-full w-[106px] border-r border-[#9399a1] pl-2 leading-[21px]">Страница: 1 из 5</span>
    <span className="h-full w-24 border-r border-[#9399a1] pl-[9px] leading-[21px]">Число слов: 11</span>
    <span className="flex h-full w-[93px] items-center gap-4 border-r border-[#9399a1] pl-2">
      <Icon className="size-[17px]">
        <path d="M0 9l7-4 6 4-7 5z" fill="#fff" stroke="#3f62a8" />
        <path d="M0 10.500l6 4.500 7-5" stroke="#3f62a8" strokeWidth="1.500" />
        <path d="M8 1l6 7M15 1L8 8" stroke="#ea4a2a" strokeWidth="1.800" />
      </Icon>
      русский
    </span>
    <div className="ml-auto flex h-full items-center gap-[3px] border-l border-[#9399a1] pl-[3px]">
      <button aria-label="Разметка страницы" className="flex h-5 w-[19px] items-center justify-center rounded-xs border border-[#c2902e] bg-[#fddc7c]">
        <Icon className="size-[13px]"><path d="M1.500.5h13v15h-13z" fill="#fff" stroke="#555" /><path d="M4 4h8M4 7h8M4 10h8M4 13h8" stroke="#666" /></Icon>
      </button>
      <button aria-label="Режим чтения" className="ml-[3px]"><Icon className="size-[13px]"><path d="M1 2l6 1v12l-6-1zM15 2L9 3v12l6-1z" fill="#fff" stroke="#555" /><path d="M3 6h2M3 9h2M11 6h2M11 9h2" stroke="#666" /></Icon></button>
      <button aria-label="Веб-документ" className="ml-[3px]"><Icon className="size-[13px]"><path d="M1.500.5h10v13h-10z" fill="#fff" stroke="#666" /><path d="M3 4h7M3 7h7M3 10h4" stroke="#666" /><circle cx="12" cy="12" r="3.500" fill="#3f80b8" stroke="#2a6a3a" /></Icon></button>
      <button aria-label="Структура" className="ml-[3px]"><Icon className="size-[13px]"><path d="M1 2h11M5 5h8M5 8h8M1 11h11M5 14h8" stroke="#888" strokeWidth="1.400" /></Icon></button>
      <button aria-label="Черновик" className="ml-[3px]"><Icon className="size-[13px]"><path d="M2 2h12M2 5h12M2 8h12M2 11h12M2 14h12" stroke="#777" strokeWidth="1.400" /></Icon></button>
      <span className="ml-2">180%</span>
      <button aria-label="Уменьшить" className="ml-1 flex size-[17px] items-center justify-center rounded-full border border-[#777] bg-white"><span className="h-[2px] w-2 bg-[#555]" /></button>
      <div className="relative flex w-[96px] items-center">
        <span className="h-px w-full bg-[#777d85]" />
        <Icon className="absolute left-[51px] h-[14px] w-[10px]" box="0 0 10 14"><path d="M.5.5h9V9L5 13.500.5 9z" fill="#f3f4f6" stroke="#777d85" /></Icon>
      </div>
      <button aria-label="Увеличить" className="mr-[3px] flex size-[17px] items-center justify-center rounded-full border border-[#777] bg-white">
        <Icon className="size-[9px]" box="0 0 9 9"><path d="M4.500 0v9M0 4.500h9" stroke="#555" strokeWidth="2" /></Icon>
      </button>
    </div>
  </footer>
);

const taskButton = 'flex h-full items-center justify-center rounded-sm border border-[#4c6383] bg-linear-to-b from-[#c3d4ea] to-[#a9c0de] shadow-[inset_0_0_0_1px_#d6e4f4]';

const Taskbar: React.FC = () => (
  <nav className="flex h-[39px] shrink-0 border-t border-[#42536b] bg-[#a7c0dc] text-[12px]">
    <div className="flex w-[60px] items-center justify-center bg-[#8397b0] pr-1">
      <button aria-label="Пуск">
        <Icon className="size-9" box="0 0 36 36">
          <circle cx="18" cy="18" r="17.500" fill="#1d4c7d" stroke="#0f2a48" />
          <path d="M3 22a15 15 0 0 0 30 0c-8 4-22 4-30 0z" fill="#22b7e8" />
          <path d="M4 13a15 15 0 0 1 28 0c-8 4-20 4-28 0z" fill="#7fa4c4" />
          <path d="M11 9c3-2 5-1 7 0l-2 8c-2-1-4-2-7 0z" fill="#ee5a24" />
          <path d="M19 10c3 1 5 1 9-1l-2 8c-3 2-6 2-9 0z" fill="#86c440" />
          <path d="M8 18c3-2 5-1 7 0l-2 8c-2-1-4-2-7 0z" fill="#3f9ee0" />
          <path d="M17 19c3 1 5 1 8-1l-2 8c-3 2-5 2-8 0z" fill="#fbc92d" />
        </Icon>
      </button>
    </div>
    <div className="flex gap-1">
      <button aria-label="Google Chrome" className={`${taskButton} w-[59px]`}>
        <Icon className="size-7" box="0 0 28 28">
          <circle cx="14" cy="14" r="14" fill="#fbd20b" />
          <path d="M14 0A14 14 0 0 1 26.500 8H14a6 6 0 0 0-5.500 3.500L3 5.500A14 14 0 0 1 14 0z" fill="#dc2b23" />
          <path d="M2.500 6A14 14 0 0 0 12.500 28l5-8.500a6 6 0 0 1-9-3z" fill="#4aa048" />
          <circle cx="14" cy="14" r="6" fill="#2f78c4" stroke="#fff" strokeWidth="1.500" />
        </Icon>
      </button>
      <div className="flex">
        <button aria-label="1С:Предприятие" className={`${taskButton} w-[52px] !from-[#f4f7fc] !to-[#cfdcee]`}>
          <OneCLogo className="size-[30px]" />
        </button>
        <span className="h-full w-1 rounded-r-sm border-r border-[#4c6383]" />
        <span className="h-full w-1 rounded-r-sm border-r border-[#7f94b2]" />
      </div>
      <div className="flex">
        <button aria-label="Microsoft Word" className={`${taskButton} w-[54px]`}>
          <Icon className="size-[30px]" box="0 0 30 30">
            <path d="M6 1h23v28H1V6z" fill="#dbe8f8" stroke="#2a5faa" />
            <text x="4" y="20" fontSize="22" fontWeight="700" fontFamily="Liberation Sans, sans-serif" fill="#1d52a6">W</text>
            <path d="M2 22l13 6H2zM22 18l7 3-4 7-7-3z" fill="#fff" stroke="#b9cbe6" />
          </Icon>
        </button>
        <span className="h-full w-1 rounded-r-sm border-r border-[#4c6383]" />
      </div>
      <button aria-label="Диспетчер устройств" className={`${taskButton} w-[59px]`}>
        <Icon className="size-[30px]" box="0 0 30 30">
          <path d="M9 7h12l-2 19h-8z" fill="#e8efe8" stroke="#7f8a8f" />
          <path d="M11 11h9l-1 8h-7z" fill="#7de05a" />
          <path d="M12 17h7l-1 9h-5z" fill="#3fc21c" />
          <path d="M9 7L7 1" stroke="#8a949a" strokeWidth="2" />
          <path d="M1 19h6v4H1zM7 21h3M20 21h3M23 19h6v4h-6z" fill="#f3f4f4" stroke="#8a949a" strokeWidth="1.500" />
        </Icon>
      </button>
    </div>
    <div className="ml-auto flex items-center gap-[7px] bg-linear-to-r from-[#a7c0dc] to-[#8195ae] to-[30px] pl-[58px] text-white">
      <span className="mr-3">EN</span>
      <Icon className="mr-1 h-[6px] w-2" box="0 0 8 6"><path d="M0 6h8L4 0z" fill="#fff" /></Icon>
      <Icon className="size-[17px]">
        <path d="M5.500 5.500h6v4h2v5h-3.500v-2h-1.500v2H4v-5h1.500zM6.500 5.500V1.500h2v4" fill="#fff" stroke="#1fb52a" strokeWidth="1.800" />
      </Icon>
      <Icon className="size-[17px]"><path d="M9 0c0 4-6 5-6 10a5 5 0 0 0 11 0c0-2-1-4-2-5 0 2-1 3-2 3 1-3 1-6-1-8z" fill="#fbb030" /><path d="M8 16a3 3 0 0 1-2-5c1-1 2-2 2-3 2 2 4 3 3 6-1 1-2 2-3 2z" fill="#e8551c" /></Icon>
      <Icon className="size-[17px]"><path d="M5 3h10v9H5zM8 15h6M11 12v3M1.500 1v5h3V1M3 6v8h5" fill="#5d6f86" stroke="#fff" strokeWidth="1.300" /></Icon>
      <div className="w-[76px] text-center leading-4">
        <div>15:07</div>
        <div>11.07.2014</div>
      </div>
      <button aria-label="Показать рабочий стол" className="h-full w-[14px] border border-[#33425a] bg-linear-to-b from-[#9aa8ba] to-[#4e5d73]" />
    </div>
  </nav>
);

const TABS = ['Вставка', 'Разметка страницы', 'Ссылки', 'Рассылки', 'Рецензирование', 'Вид'];

const WordWindow: React.FC = () => (
  <div className="relative flex min-w-0 flex-col overflow-hidden border-r-2 border-black bg-[#fcfcfd] font-['Noto_Sans','Open_Sans',sans-serif] text-[11px] text-[#3b3b3b]">
    <header className="flex h-6 shrink-0 items-center gap-2 pl-[2px]">
      <Icon><path d="M1.500.5h13v15h-13z" fill="#e9f1fb" stroke="#2a5faa" /><text x="2" y="12" fontSize="12" fontWeight="700" fontFamily="Liberation Sans, sans-serif" fill="#1d52a6">W</text></Icon>
      <span className="-ml-1 h-3 w-px bg-[#888]" />
      <Icon className="size-[15px]"><path d="M1 1h14v14H1z" fill="#4a4fb0" /><path d="M4 1h8v6H4z" fill="#eef0fa" /><path d="M5 10h6v5H5z" fill="#23265c" /><path d="M6 11h2v3H6z" fill="#fff" /></Icon>
      <Icon className="size-[15px]"><path d="M3 6c5-5 11-2 10 3-1 3-3 4-5 5" stroke="#4672c4" strokeWidth="2.400" /><path d="M1 2v7h7z" fill="#4672c4" /></Icon>
      <Caret className="text-[#222]" />
      <Icon className="size-[15px]"><path d="M11 3a5.500 5.500 0 1 1-6 0" stroke="#3a78d0" strokeWidth="2.600" /><path d="M2 1h7v6z" fill="#3a78d0" /></Icon>
      <span className="h-3 w-px bg-[#888]" />
      <Caret className="text-[#222]" />
      <div className="grow pr-8 text-center whitespace-pre text-[#8b8b8b]">Управление характеристиками мед.оборудования  -  Microsoft Word</div>
      <div className="flex items-center gap-5 pr-[10px]">
        <button aria-label="Свернуть"><Icon><path d="M2.500 7.500h11v4h-11z" stroke="#555b66" /></Icon></button>
        <button aria-label="Восстановить"><Icon><path d="M5.500 4.500v-3h9v9h-3M2.500 4.500h9v9h-9zM5.500 7.500h3v3h-3z" stroke="#555b66" /></Icon></button>
        <button aria-label="Закрыть"><Icon><path d="M2.500 2.500h3l2.500 3 2.500-3h3L10 8l3.500 5.500h-3L8 10.500l-2.500 3h-3L6 8z" stroke="#555b66" /></Icon></button>
      </div>
    </header>
    <div className="flex h-6 shrink-0 items-end border-b border-[#b5b9bf]">
      <button className="h-6 w-14 rounded-t-sm bg-linear-to-b from-[#2f66c0] to-[#2d6bd0] text-white">Файл</button>
      <button className="-mb-px ml-1 h-6 w-[68px] rounded-t border border-b-0 border-[#b5b9bf] bg-white">Главная</button>
      <div className="ml-[15px] flex h-6 items-center gap-7">
        {TABS.map((t) => (
          <button key={t}>{t}</button>
        ))}
      </div>
      <div className="mr-[2px] ml-auto flex h-6 items-center gap-3">
        <Icon className="size-[10px]" box="0 0 10 10"><path d="M.8 6.500L5 1.500l4.200 5v2H7L5 6.500l-2 2H.8z" stroke="#666b74" /></Icon>
        <button className="size-4 rounded-full bg-[#3f74c8] leading-4 font-bold text-white">?</button>
      </div>
    </div>
    <Ribbon />
    <div className="h-[3px] shrink-0 bg-[#b1b6bd]" />
    <RulerRow />
    <WordDocument />
    <StatusBar />
    <Taskbar />

    <aside className="absolute top-[684px] left-[1px] flex h-9 w-[197px] items-start rounded-md border border-[#a5a7a8] bg-[#eeeacb]/50 pt-[5px] font-['DejaVu_Sans_Condensed','DejaVu_Sans',sans-serif] text-[11px] leading-[13px] text-[#dc6868]">
      <Icon className="mx-1 size-3 opacity-60"><path d="M6.500 1.500h8v6h-8zM1.500 7.500h8v6h-8z" fill="#9fb8cc" stroke="#7f98ac" strokeWidth="1.500" /></Icon>
      <div className="grow whitespace-nowrap">
        <div>Текущие вызовы: 2</div>
        <div>Накопленные вызовы: 112</div>
      </div>
      <button aria-label="Закрыть" className="mr-2">
        <Icon className="size-[9px]" box="0 0 9 9"><path d="M1 1l7 7M8 1L1 8" stroke="#b5a48c" strokeWidth="2" /></Icon>
      </button>
    </aside>
  </div>
);

const App: React.FC = () => {
  return (
    <main className="grid h-screen grid-cols-[1921fr_1439fr] overflow-hidden bg-black">
      <WordWindow />
      <div className="grid min-h-0 min-w-0 grid-rows-[5fr_1fr]">
        <EnterpriseWindow skin={large} id="main" />
      </div>
    </main>
  );
};

export default App;
